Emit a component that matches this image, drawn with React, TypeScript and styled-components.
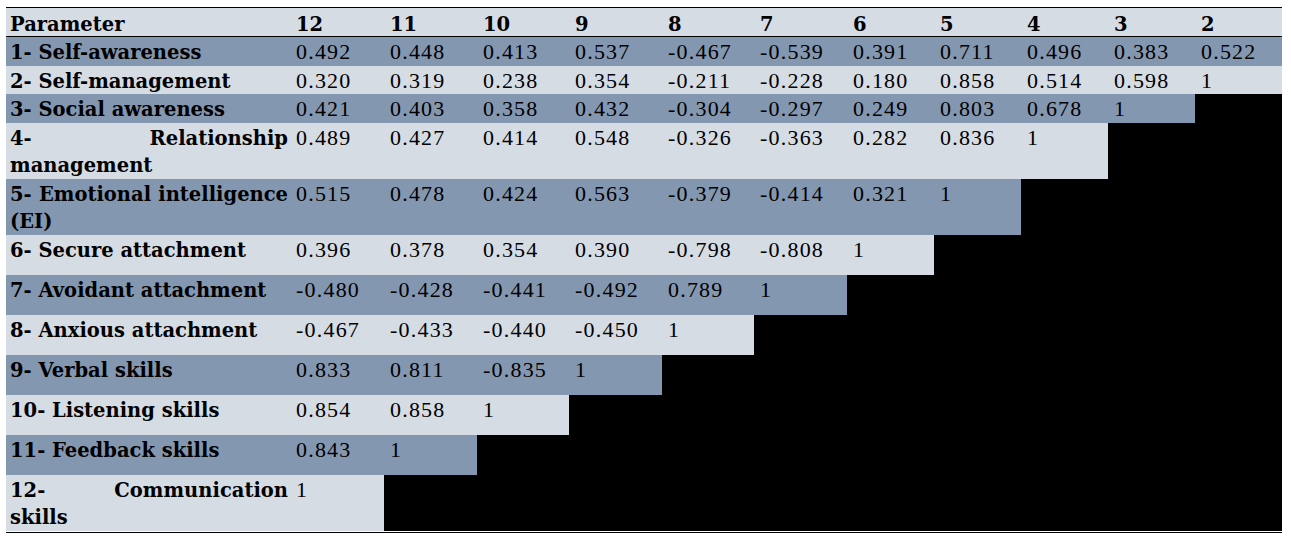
import * as React from 'react';
import styled, { createGlobalStyle } from 'styled-components';

const GlobalStyle = createGlobalStyle`
  html, body {
    margin: 0;
    padding: 0;
    background: #fff;
  }
`;

const LIGHT = '#d6dce4';
const DARK = '#8497b0';

const columns = ['12', '11', '10', '9', '8', '7', '6', '5', '4', '3', '2'];
const widths = [284, 94, 93, 92, 93, 92, 93, 87, 87, 87, 87, 87];

type Row = {
  label: string[];
  values: string[];
  height: number;
};

const rows: Row[] = [
  { label: ['1- Self-awareness'], height: 28.5, values: ['0.492', '0.448', '0.413', '0.537', '-0.467', '-0.539', '0.391', '0.711', '0.496', '0.383', '0.522'] },
  { label: ['2- Self-management'], height: 28.5, values: ['0.320', '0.319', '0.238', '0.354', '-0.211', '-0.228', '0.180', '0.858', '0.514', '0.598', '1'] },
  { label: ['3- Social awareness'], height: 28.5, values: ['0.421', '0.403', '0.358', '0.432', '-0.304', '-0.297', '0.249', '0.803', '0.678', '1'] },
  { label: ['4- Relationship', 'management'], height: 56, values: ['0.489', '0.427', '0.414', '0.548', '-0.326', '-0.363', '0.282', '0.836', '1'] },
  { label: ['5- Emotional intelligence', '(EI)'], height: 56, values: ['0.515', '0.478', '0.424', '0.563', '-0.379', '-0.414', '0.321', '1'] },
  { label: ['6- Secure attachment'], height: 40, values: ['0.396', '0.378', '0.354', '0.390', '-0.798', '-0.808', '1'] },
  { label: ['7- Avoidant attachment'], height: 40, values: ['-0.480', '-0.428', '-0.441', '-0.492', '0.789', '1'] },
  { label: ['8- Anxious attachment'], height: 40, values: ['-0.467', '-0.433', '-0.440', '-0.450', '1'] },
  { label: ['9- Verbal skills'], height: 40, values: ['0.833', '0.811', '-0.835', '1'] },
  { label: ['10- Listening skills'], height: 40, values: ['0.854', '0.858', '1'] },
  { label: ['11- Feedback skills'], height: 40, values: ['0.843', '1'] },
  { label: ['12- Communication', 'skills'], height: 56, values: ['1'] },
];

const Page = styled.div`
  padding: 7px 0 0 6px;
`;

const Table = styled.table`
  width: 1276px;
  table-layout: fixed;
  border-collapse: separate;
  border-spacing: 0;
  border-top: 1px solid #000;
  border-bottom: 1px solid #000;
  padding: 0 0 1px 0;
  color: #000;
`;

const HeadRow = styled.tr`
  height: 29px;
`;

const HeadCell = styled.th<{ $first?: boolean }>`
  background: ${LIGHT};
  border-bottom: 1px solid #000;
  padding: 6px 4px 0 ${p => (p.$first ? 4 : 6)}px;
  line-height: 22px;
  text-align: left;
  vertical-align: top;
  font-family: 'DejaVu Serif', serif;
  font-size: 19.5px;
  font-weight: bold;
`;

const LabelCell = styled.td<{ $dark: boolean; $split: boolean }>`
  background: ${p => (p.$dark ? DARK : LIGHT)};
  padding: ${p => (p.$split ? '2px 2px 0 4px' : '4px 4px 0 4px')};
  line-height: ${p => (p.$split ? 27 : 24)}px;
  vertical-align: top;
  font-family: 'DejaVu Serif', serif;
  font-size: 19.5px;
  font-weight: bold;
  text-align: ${p => (p.$split ? 'justify' : 'left')};
  text-align-last: ${p => (p.$split ? 'justify' : 'auto')};
  white-space: ${p => (p.$split ? 'normal' : 'nowrap')};
`;

const ValueCell = styled.td<{ $dark: boolean; $empty: boolean }>`
  background: ${p => (p.$empty ? '#000' : p.$dark ? DARK : LIGHT)};
  padding: 2px 2px 0 6px;
  line-height: 26px;
  vertical-align: top;
  white-space: nowrap;
  font-family: 'Liberation Serif', serif;
  font-size: 22px;
  letter-spacing: 1.2px;
`;

export default function App() {
  return (
    <Page>
      <GlobalStyle />
      <Table>
        <colgroup>
          {widths.map((w, i) => <col key={i} style={{ width: w }} />)}
        </colgroup>
        <thead>
          <HeadRow>
            <HeadCell $first>Parameter</HeadCell>
            {columns.map(c => <HeadCell key={c}>{c}</HeadCell>)}
          </HeadRow>
        </thead>
        <tbody>
          {rows.map((row, r) => {
            const dark = r % 2 === 0;
            return (
              <tr key={r} style={{ height: row.height }}>
                <LabelCell $dark={dark} $split={row.label.length > 1}>
                  {row.label.length > 1
                    ? <>{row.label[0]}<br />{row.label[1]}</>
                    : row.label[0]}
                </LabelCell>
                {columns.map((c, i) => (
                  <ValueCell key={c} $dark={dark} $empty={i >= row.values.length}>
                    {row.values[i] ?? ''}
                  </ValueCell>
                ))}
              </tr>
            );
          })}
        </tbody>
      </Table>
    </Page>
  );
}
